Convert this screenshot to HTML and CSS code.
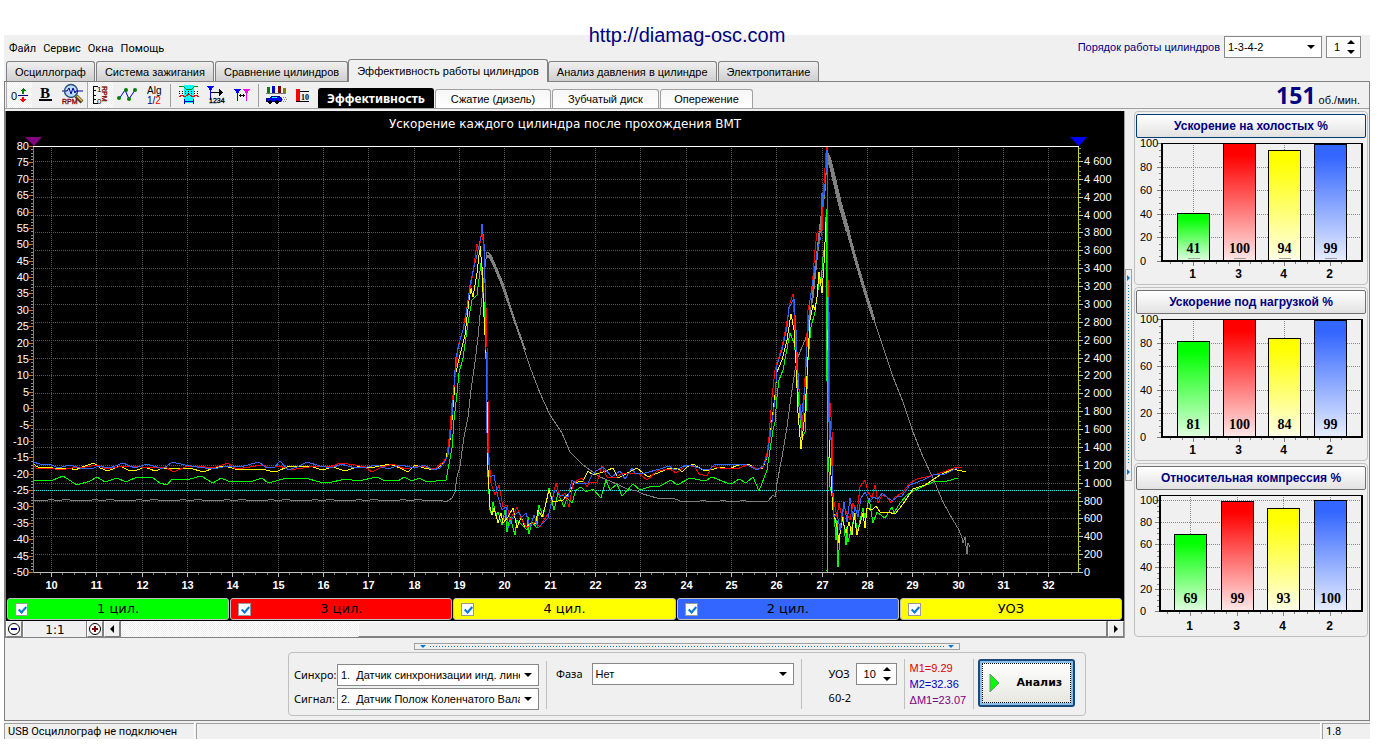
FILE: index.html
```html
<!DOCTYPE html>
<html lang="ru">
<head>
<meta charset="utf-8">
<title>Diamag</title>
<link rel="stylesheet" href="styles.css">
</head>
<body>
<div class="app">
  <header class="header">
    <nav class="menu">
      <button type="button">Файл</button><button type="button">Сервис</button><button type="button">Окна</button><button type="button">Помощь</button>
    </nav>
    <a class="site" href="#">http://diamag-osc.com</a>
    <div class="order">
      <label for="order">Порядок работы цилиндров</label>
      <span class="select order-select"><select id="order"><option>1-3-4-2</option></select></span>
      <span class="spin"><input type="text" value="1" aria-label="Номер цилиндра"></span>
    </div>
  </header>

  <nav class="tabs">
    <button type="button">Осциллограф</button>
    <button type="button">Система зажигания</button>
    <button type="button">Сравнение цилиндров</button>
    <button type="button" class="active">Эффективность работы цилиндров</button>
    <button type="button">Анализ давления в цилиндре</button>
    <button type="button">Электропитание</button>
  </nav>

  <main class="page">
    <div class="toolbar">
      <div class="tools">
        <button type="button" class="pressed" aria-label="Ноль"><svg width="26" height="26" shape-rendering="crispEdges"><text x="5" y="18" class="t-sans" font-size="11">0</text><path d="M12 13.5h10" stroke="#000080"/><path d="M17 12V8" stroke="#008000" stroke-width="2"/><path d="M14 9h6l-3-3z" fill="#008000"/><path d="M17 15v3" stroke="#f00" stroke-width="2"/><path d="M14 17h6l-3 4z" fill="#f00"/></svg></button>
        <button type="button" aria-label="Жирный"><svg width="26" height="26"><text x="12" y="16" text-anchor="middle" class="t-serif" font-size="15">B</text><path d="M6 17h13v2H6z"/></svg></button>
        <button type="button" aria-label="Обороты"><svg width="26" height="26"><path d="M2 9h21" stroke="#0000a0"/><circle cx="11" cy="9" r="6.500" fill="#b8dcf8" stroke="#305078" stroke-width="1.400"/><path d="M5 9h2l2-3 2 6 2-6 2 5 1-2h2" fill="none" stroke="#0000a0"/><path d="M16 14l6 6" stroke="#504020" stroke-width="4"/><path d="M17 14l5 5" stroke="#e8c858" stroke-width="1.500"/><text x="2" y="22" class="t-sans" font-size="7" stroke="#800000" stroke-width="0.300" fill="#800000">RPM</text></svg></button>
        <button type="button" class="pressed" aria-label="Шкала оборотов"><svg width="26" height="26" shape-rendering="crispEdges"><path d="M11 4.500H6.500v17H11M7 8.500h2M7 13.500h2M7 17.500h2" fill="none" stroke="#000"/><text x="10" y="10" class="t-sans" font-size="8">1</text><text x="10" y="22" class="t-sans" font-size="8">0</text><text transform="translate(15 4) rotate(90)" class="t-sans" font-size="7" stroke="#800000" stroke-width="0.300" fill="#800000">RPM</text></svg></button>
        <button type="button" aria-label="Точки"><svg width="26" height="26"><path d="M5 17l6-9 4 9 6-9" fill="none" stroke="#0000d0"/><g fill="#008000"><circle cx="5" cy="16" r="2"/><circle cx="12" cy="8" r="2"/><circle cx="15" cy="17" r="2"/><circle cx="21" cy="8" r="2"/></g></svg></button>
        <button type="button" aria-label="Алгоритм"><svg width="26" height="26"><text x="6" y="12" class="t-sans" font-size="10">Alg</text><text x="6" y="22" class="t-sans" font-size="10" fill="#000080">1/<tspan fill="#f00">2</tspan></text></svg></button>
        <span class="sep"></span>
        <button type="button" aria-label="Усреднение"><svg width="26" height="26" shape-rendering="crispEdges"><path d="M9 3h10v18H9z" fill="#0ff"/><path d="M4 4h4l3 3h6l3-3h3" fill="none" stroke="#008000"/><path d="M4 9.500h19M4 11.500h19" stroke="#000" stroke-dasharray="1 2"/><path d="M4 15l3-2 3 2 4-3 4 3 3-2 3 2" fill="none" stroke="#f00"/><path d="M9.500 17v5M18.500 17v5M9 19.500h9" stroke="#0000c0"/></svg></button>
        <button type="button" aria-label="Метка"><svg width="26" height="26" shape-rendering="crispEdges"><path d="M5 4h7l-3.500 5z" fill="#00f"/><path d="M8.500 7v11" stroke="#00f"/><path d="M9 10.500h9" stroke="#000"/><path d="M17 7l4 3.500-4 3.500z"/><text x="7" y="21" class="t-sans" font-size="7" stroke="#000" stroke-width="0.300">1234</text></svg></button>
        <button type="button" aria-label="Расстояние"><svg width="26" height="26" shape-rendering="crispEdges"><path d="M5 7h7l-3.500 5z" fill="#00f"/><path d="M8.500 10v9" stroke="#00f"/><path d="M14 7h7l-3.500 5z" fill="#f0f"/><path d="M17.500 10v9" stroke="#f0f"/><path d="M10 13.500h6M11.500 12v3M14.500 12v3" stroke="#000"/></svg></button>
        <span class="sep"></span>
        <button type="button" aria-label="Мощность"><svg width="26" height="26" shape-rendering="crispEdges"><path d="M4 5h3v6H4z" fill="#008000"/><path d="M9 4h3v7H9z" fill="#00c"/><path d="M15 4h3v7h-3z" fill="#800000"/><path d="M20 6h3v5h-3z" fill="#808000"/><path d="M3 11h20v1H3z" fill="#777"/><path d="M3 17l4-1 2-2h6l3 2v3H3z" fill="#00f" stroke="#000080"/><path d="M9 15h5v1H8z" fill="#0ff"/><circle cx="7" cy="20" r="1.700"/><circle cx="14" cy="20" r="1.700"/><path d="M18 15h5M19 17h5M18 19h5" stroke="#888" stroke-dasharray="1 1"/></svg></button>
        <button type="button" aria-label="Столбец"><svg width="26" height="26" shape-rendering="crispEdges"><path d="M6 7h4v12H6z" fill="#f00"/><path d="M10 9.500h9M6 19.500h13" stroke="#000"/><text x="11" y="18" class="t-serif" font-size="8">10</text></svg></button>
      </div>
      <nav class="subtabs">
        <button type="button" class="active">Эффективность</button>
        <button type="button" class="w-wide">Сжатие (дизель)</button>
        <button type="button" class="w-mid">Зубчатый диск</button>
        <button type="button" class="w-small">Опережение</button>
      </nav>
      <div class="rpm"><b>151</b> об./мин.</div>
    </div>

    <div class="work">
      <section class="scope">
        <svg id="scope" class="scope-plot" viewBox="6 111 1118 486" role="img" aria-label="Ускорение каждого цилиндра после прохождения ВМТ">
          <text class="plot-title" x="565" y="128" text-anchor="middle">Ускорение каждого цилиндра после прохождения ВМТ</text>
          <g id="grid" class="crisp"></g>
          <g id="traces" class="crisp"></g>
          <g id="axes" class="crisp"></g>
          <path d="M25 137h17l-8 9z" fill="#800080"/>
          <path d="M1070 137h17l-8 9z" fill="#00f"/>
          <g id="labels"></g>
        </svg>
        <div class="legend">
          <label class="green"><input type="checkbox" checked><span>1 цил.</span></label>
          <label class="red"><input type="checkbox" checked><span>3 цил.</span></label>
          <label class="yellow"><input type="checkbox" checked><span>4 цил.</span></label>
          <label class="blue"><input type="checkbox" checked><span>2 цил.</span></label>
          <label class="yellow"><input type="checkbox" checked><span>УОЗ</span></label>
        </div>
        <div class="scroll">
          <button type="button" aria-label="Уменьшить"><svg width="14" height="14"><circle cx="7" cy="7" r="5.500" fill="#fff" stroke="#000"/><path d="M4 6h6v2H4z" fill="#000080"/></svg></button>
          <output class="zoom">1:1</output>
          <button type="button" aria-label="Увеличить"><svg width="14" height="14"><circle cx="7" cy="7" r="5.500" fill="#fff" stroke="#000"/><path d="M4 6h6v2H4zM6 4h2v6H6z" fill="#800000"/></svg></button>
          <button type="button" class="arrow" aria-label="Влево"><svg width="8" height="8"><path d="M6 0v8L2 4z"/></svg></button>
          <div class="track"><div class="thumb"></div></div>
          <button type="button" class="arrow" aria-label="Вправо"><svg width="8" height="8"><path d="M2 0v8l4-4z"/></svg></button>
        </div>
      </section>
      <div class="vsplit"><div class="grip"><i></i><u></u><i></i></div></div>
      <aside class="cards">
        <section class="card"><button type="button" class="focus">Ускорение на холостых %</button><svg class="bars" viewBox="0 0 230 145"></svg></section>
        <section class="card"><button type="button">Ускорение под нагрузкой %</button><svg class="bars" viewBox="0 0 230 145"></svg></section>
        <section class="card"><button type="button">Относительная компрессия %</button><svg class="bars" viewBox="0 0 230 145"></svg></section>
      </aside>
    </div>

    <div class="hsplit"><i></i><u></u><i></i></div>

    <form class="controls">
      <div class="inputs">
        <label for="sync">Синхро:</label>
        <span class="select"><select id="sync"><option>1.&nbsp; Датчик синхронизации инд. линейка</option></select></span>
        <label for="signal">Сигнал:</label>
        <span class="select"><select id="signal"><option>2.&nbsp; Датчик Полож Коленчатого Вала</option></select></span>
      </div>
      <div class="phase">
        <label for="phase">Фаза</label>
        <span class="select"><select id="phase"><option>Нет</option></select></span>
      </div>
      <div class="advance">
        <div class="advance-row"><label for="uoz">УОЗ</label><span class="spin wide"><input id="uoz" type="text" value="10"></span></div>
        <div class="teeth">60-2</div>
      </div>
      <div class="marks"><div class="m1">M1=9.29</div><div class="m2">M2=32.36</div><div class="dm">ΔM1=23.07</div></div>
      <button type="button" class="analyze"><svg width="12" height="20"><path d="M1 1v18l9-9z" fill="#0f0" stroke="#6a9a6a"/></svg><b>Анализ</b></button>
    </form>
  </main>

  <footer class="status"><span class="usb">USB Осциллограф не подключен</span><span class="msg"></span><span class="ver">1.8</span></footer>
</div>
<script src="script.js"></script>
</body>
</html>
```
FILE: styles.css
```css
* { box-sizing: border-box; }
body {
  margin: 0;
  padding: 35px 12px 5px 4px;
  background: #fff;
  color: #000;
  font: 11px/14px "Noto Sans", sans-serif;
}
button, select, input { font: inherit; color: inherit; margin: 0; }
button { padding: 0; border: 0; background: none; }
.app { background: #f0f0f0; }
.crisp { shape-rendering: crispEdges; }

.header { position: relative; display: flex; height: 24px; padding-right: 9px; justify-content: space-between; }
.menu { display: flex; align-items: center; gap: 7px; padding: 3px 0 0 5px; font-family: Roboto, "Noto Sans", sans-serif; }
.site {
  position: absolute; left: 50%; top: -11px; transform: translateX(-50%);
  color: #000080; font: 20px/23px "Liberation Sans", sans-serif; text-decoration: none;
}
.order { display: flex; gap: 4px; align-items: center; color: #000080; font: 11px/14px "Liberation Sans", sans-serif; }
.order-select { width: 98px; }

.select, .spin { position: relative; display: inline-flex; color: #000; font: 11px/14px "Liberation Sans", sans-serif; }
.select select {
  appearance: none; width: 100%; height: 22px; padding: 0 18px 0 3px;
  border: 1px solid #888; border-radius: 0; background: #fff; outline: 0;
}
.select::after {
  content: ""; position: absolute; right: 7px; top: 9px;
  border: 4px solid transparent; border-top-color: #000; border-bottom: 0; pointer-events: none;
}
.spin { width: 35px; }
.spin.wide { width: 41px; }
.spin input { width: 100%; height: 22px; padding: 0 16px 0 7px; border: 1px solid #888; background: #fff; outline: 0; }
.spin::before, .spin::after { content: ""; position: absolute; right: 6px; border: 4px solid transparent; }
.spin::before { top: 4px; border-bottom-color: #000; border-top: 0; }
.spin::after { bottom: 4px; border-top-color: #000; border-bottom: 0; }

.tabs { display: flex; align-items: flex-end; gap: 1px; height: 22px; padding-left: 2px; }
.tabs button {
  height: 20px; padding: 0 8px; border: 1px solid #808080; border-bottom: 0; border-radius: 3px 3px 0 0;
  background: linear-gradient(#f0f0f0, #cfcfcf); font: 11px/18px "Liberation Sans", sans-serif;
}
.tabs .active { position: relative; height: 23px; margin: 0 -1px -1px; background: #f0f0f0; }

.page { border: 1px solid #808080; padding-bottom: 4px; }
.toolbar { display: flex; height: 27px; padding: 0 9px 0 1px; border-bottom: 1px solid #a0a0a0; }
.tools { display: flex; gap: 1px; align-items: flex-end; }
.tools button { width: 26px; height: 26px; }
.tools svg { display: block; }
.tools .pressed { background: repeating-conic-gradient(#fff 0 25%, #eee 0 50%) 0 0 / 2px 2px; border-left: 1px solid #aaa; }
.tools .pressed svg { margin-left: -1px; }
.sep { width: 1px; height: 23px; margin: 1px 3px 1px 2px; background: #a0a0a0; }
.t-sans { font-family: "Liberation Sans", sans-serif; }
.t-serif { font-family: "Liberation Serif", serif; font-weight: bold; }
.subtabs { display: flex; align-items: flex-end; gap: 1px; margin-left: 2px; }
.subtabs button {
  height: 19px; border: 1px solid #a0a0a0; border-bottom: 0; border-radius: 3px 3px 0 0;
  background: linear-gradient(#f6f6f6, #fff); font: 11px/18px "Liberation Sans", sans-serif;
}
.subtabs .active { width: 116px; height: 20px; background: #000; border-color: #000; color: #fff; font: bold 12px/20px "Noto Sans", sans-serif; }
.subtabs .w-wide { width: 116px; }
.subtabs .w-mid { width: 107px; }
.subtabs .w-small { width: 93px; }
.rpm { margin-left: auto; font: 11px/26px "Liberation Sans", sans-serif; white-space: nowrap; }
.rpm b { color: #000080; font: bold 23px/26px "Noto Sans", sans-serif; }

.work { display: flex; padding-top: 2px; }
.scope { flex: 1; min-width: 0; background: #000; border-left: 1px solid #808080; border-bottom: 1px solid #808080; }
.scope-plot { display: block; width: 100%; height: auto; background: #000; }
.scope-plot text { fill: #fff; font: 11px "Liberation Sans", sans-serif; }
.scope-plot .plot-title { font: 12px "DejaVu Sans", sans-serif; }
.scope-plot .bold { font-weight: bold; }

.legend { display: flex; gap: 1px; padding: 1px 2px 1px 1px; }
.legend label {
  flex: 1; display: flex; align-items: center; height: 22px; padding-left: 7px;
  border: 1px solid #c0c0c0; border-radius: 3px; font: 13px/20px "DejaVu Sans", sans-serif;
}
.legend span { flex: 1; margin-right: 20px; text-align: center; }
.legend input { appearance: none; position: relative; width: 13px; height: 13px; border: 1px solid #999; background: #fff; }
.legend input:checked::after {
  content: ""; position: absolute; left: 4px; top: 1px; width: 3px; height: 6px;
  border: solid #0078d7; border-width: 0 2px 2px 0; transform: rotate(42deg);
}
.green { background: #0f0; }
.red { background: #f00; }
.yellow { background: #ff0; }
.blue { background: #36f; }

.scroll { display: flex; gap: 1px; height: 16px; background: #808080; }
.scroll button { width: 16px; border: 1px solid; border-color: #fff #808080 #808080 #fff; background: #f0f0f0; }
.scroll button svg { display: block; margin: auto; }
.zoom { width: 63px; background: #f0f0f0; border-left: 1px solid #fff; text-align: center; font: 12px/18px "DejaVu Sans", sans-serif; }
.track { flex: 1; display: flex; justify-content: flex-end; background: repeating-conic-gradient(#fff 0 25%, #eee 0 50%) 0 0 / 2px 2px; }
.thumb { width: 76%; border: 1px solid; border-color: #fff #808080 #808080 #fff; background: #f0f0f0; }

.vsplit { display: flex; align-items: center; width: 10px; border-left: 1px solid #a0a0a0; }
.grip { display: flex; flex-direction: column; align-items: center; justify-content: space-between; width: 7px; height: 212px; border: 1px solid #a0a0a0; padding: 5px 0; }
.grip i { border: 3px solid transparent; border-left-color: #0078d7; border-right: 0; }
.grip u { flex: 1; width: 1px; margin: 4px 0; background: repeating-linear-gradient(#0078d7 0 1px, transparent 1px 3px); }

.cards { display: flex; flex-direction: column; gap: 2px; width: 234px; margin-right: 1px; }
.card { height: 174px; padding: 2px 1px; border: 1px solid #c0c0c0; border-radius: 4px; }
.card button {
  display: block; width: 100%; height: 24px; border: 1px solid #707070; border-radius: 2px;
  background: linear-gradient(#fff, #e2e2e2); color: #000080; font: bold 12px/20px "Liberation Sans", sans-serif;
}
.card .focus { border-color: #003c74; }
.bars { display: block; width: 100%; height: auto; }
.bars text { font: 11px "Liberation Sans", sans-serif; }
.bars .cat { font: bold 12px "Liberation Sans", sans-serif; }
.bars .val { font: bold 14px "Liberation Serif", serif; }

.hsplit { display: flex; align-items: center; width: 546px; height: 7px; margin: 5px auto 2px; border: 1px solid #a0a0a0; padding: 0 5px; }
.hsplit i { border: 3px solid transparent; border-top-color: #0078d7; border-bottom: 0; }
.hsplit u { flex: 1; height: 1px; margin: 0 4px; background: repeating-linear-gradient(90deg, #0078d7 0 1px, transparent 1px 3px); }

.controls {
  display: flex; width: 798px; height: 64px; margin: 0 auto; padding: 6px 10px 6px 5px;
  border: 1px solid #c0c0c0; border-radius: 4px; font-size: 11px;
}
.controls label { white-space: nowrap; }
.inputs { display: grid; grid-template-columns: 43px 202px; row-gap: 2px; align-items: center; padding: 5px 7px 0 0; }
.phase { display: flex; align-items: flex-start; gap: 9px; margin-top: 2px; padding: 2px 7px 0 9px; border-left: 1px solid #c0c0c0; }
.phase label, .advance label { line-height: 22px; }
.phase .select { width: 202px; }
.advance { padding: 4px 7px 0 27px; border-left: 1px solid #c0c0c0; }
.advance-row { display: flex; gap: 6px; }
.teeth { margin-top: 6px; }
.marks { width: 70px; padding: 1px 0 0 5px; border: solid #c0c0c0; border-width: 0 1px; font: 11px/16px "Liberation Sans", sans-serif; white-space: nowrap; }
.m1 { color: #e00000; }
.m2 { color: #0000c0; }
.dm { color: #800080; }
.analyze {
  display: flex; align-items: center; gap: 16px; flex: 1; height: 48px; margin-left: 4px; padding-left: 9px;
  border: 2px solid #1a4a7c; border-radius: 3px; outline: 1px dotted #000; outline-offset: -5px;
  box-shadow: inset 0 0 0 2px #8cc0ec; background: linear-gradient(#fff, #e6e6e0);
}
.analyze b { font: bold 11px/14px "DejaVu Sans", sans-serif; }

.status { display: flex; gap: 2px; padding-top: 2px; height: 18px; font: 11px/15px Roboto, "Noto Sans", sans-serif; }
.status span { border: 1px solid #a0a0a0; border-width: 1px 0 0 1px; padding-left: 3px; box-shadow: 1px 0 #fff; }
.status .usb { width: 190px; }
.msg { flex: 1; }
.ver { width: 48px; }
```
FILE: script.js
```js
const NS = 'http://www.w3.org/2000/svg';
function add(parent, name, attrs, text) {
  const el = document.createElementNS(NS, name);
  for (const key in attrs) el.setAttribute(key, attrs[key]);
  if (text !== undefined) el.textContent = text;
  parent.appendChild(el);
  return el;
}
function line(parent, x1, y1, x2, y2, stroke, dash, width) {
  add(parent, 'line', { x1, y1, x2, y2, stroke, 'stroke-dasharray': dash || 'none', 'stroke-width': width || 1 });
}
const byId = id => document.getElementById(id);

const plot = { left: 33.5, right: 1078.5, top: 146.5, bottom: 572.5 };
const grid = byId('grid'), axes = byId('axes'), labels = byId('labels');

for (let n = 10; n <= 32; n++) {
  const x = Math.round(51 + (n - 10) * 45.33) + 0.5;
  line(grid, x, 148, x, 572, '#585858', '1 1');
  line(axes, x, 572, x, 577, '#c0c0c0');
  for (let k = -1; k < 3; k++) {
    if (k === 0) continue;
    const mx = Math.floor(x + k * 11.33) + 0.5;
    line(axes, mx, 572, mx, 575, '#808080');
  }
  add(labels, 'text', { x: x, y: 589, 'text-anchor': 'middle', class: 'bold' }, n);
}
for (let v = 0; v <= 4600; v += 200) {
  const y = Math.round(572 - v * 411 / 4600) + 0.5;
  if (v) line(grid, 35, y, 1078, y, '#585858', '1 1');
  line(axes, 1079, y, 1083, y, '#c8c8c8');
  for (let k = 1; k < 4; k++) {
    const my = Math.round(y - k * 4.47) + 0.5;
    if (my > 147) line(axes, 1079, my, 1081, my, '#909090');
  }
  const text = v < 1000 ? String(v) : Math.floor(v / 1000) + ' ' + String(v % 1000).padStart(3, '0');
  add(labels, 'text', { x: 1084, y: y + 3.5 }, text);
}
for (let v = -50; v <= 80; v += 5) {
  const y = Math.round(572 - (v + 50) * 426 / 130) + 0.5;
  line(axes, 29, y, 33, y, '#c87830');
  for (let k = 1; k < 5 && v < 80; k++) {
    const my = Math.round(y - k * 3.28) + 0.5;
    line(axes, 31, my, 33, my, '#909090');
  }
  add(labels, 'text', { x: 29, y: y + 3.5, 'text-anchor': 'end' }, v);
}
line(grid, 34, 490.5, 1078, 490.5, '#0ff', '1 1');
line(axes, 33, plot.top, 1079, plot.top, '#fff');
line(axes, 33, plot.bottom, 1079, plot.bottom, '#c0c0c0');
line(axes, plot.left, 147, plot.left, 573, '#40a840');
line(axes, plot.right, 147, plot.right, 573, '#d0d040');

let idle = '';
for (let i = 0; i < 100; i++) idle += (34 + i * 4) + ',' + (500 + [0, -1, 0, 0, 1, 0, -1, 1, 0, 0, 1][(i * 7) % 11]) + ' ';
let cruise = '';
for (let i = 0; i < 18; i++) cruise += (686 + i * 4) + ',' + (501 + [0, 0, -1, 0, 1][(i * 3) % 5]) + ' ';

const traces = [
  ['#808080', 1, idle + '440,500 446,502 452,498 455,492 457,477 460,466 464,437 468,417 471,390 475,362 478,337 480,315 483,290 485,267 487,252 491,255 497,270 503,287 510,308 520,337 530,367 540,393 550,415 562,433 570,452 583,465 597,475 600,477 617,484 627,489 637,491 643,494 657,498 675,499 683,502 ' + cruise + '758,502 768,501 773,495 775,497 776,492 777,483 782,457 787,427 791,397 795,370 798,357 802,347 805,340 808,330 811,307 814,283 817,257 821,220 825,187 828,153 835,185 843,217 853,253 863,287 873,317 883,347 893,377 903,402 913,432 923,457 933,478 943,502 953,520 959,530 962,538 963,543 965,537 967,554 968,543 970,547'],
  ['#808080', 3, '487,256 490,256 496,269 503,286 508,301'],
  ['#808080', 2, '508,301 515,322 525,350'],
  ['#808080', 4, '828,155 832,170 840,204 848,232'],
  ['#808080', 3, '848,232 856,261 866,295 874,320'],
  ['#808080', 2, '812,303 816,265 821,220 825,187'],
  ['#0f0', 1, '33,481 53,480 63,476 77,485 90,481 97,477 105,482 117,478 126,482 137,477 153,478 160,483 167,485 172,479 190,479 201,476 213,483 221,478 228,481 253,481 262,478 268,483 287,478 305,478 320,482 328,483 345,479 358,481 377,477 383,480 398,481 404,477 412,481 419,478 427,482 446,480 452,448 454,420 457,393 459,373 463,358 468,323 472,300 477,295 481,263 483,287 485,317 487,400 488,477 490,510 492,515 493,502 496,515 498,512 502,525 505,510 507,532 510,517 515,535 517,520 527,530 528,517 529,534 532,522 537,528 539,505 543,517 549,488 554,510 558,493 564,507 567,498 572,503 576,490 581,487 586,492 593,489 601,498 606,480 610,490 617,484 622,496 633,484 640,490 652,486 660,486 671,480 677,485 690,478 705,481 712,477 727,483 733,483 739,479 746,483 753,477 759,491 767,470 770,450 773,430 775,422 777,397 779,380 783,370 790,333 794,343 796,357 797,377 799,407 802,438 805,432 807,390 808,360 811,327 815,312 817,297 820,277 821,283 823,257 825,243 826,217 827,209 827,571 828,457 830,487 833,500 836,540 837,520 838,567 840,533 843,517 846,545 847,527 848,542 852,527 855,513 857,533 863,508 865,518 869,498 873,523 877,512 885,518 892,507 894,513 900,503 907,495 913,491 922,487 933,482 947,481 958,478'],
  ['#ff0', 1, '33,464 38,467 46,467 60,469 70,468 75,470 85,466 94,463 100,468 108,471 120,466 130,471 137,470 145,467 155,471 163,468 175,469 190,468 203,472 214,468 225,466 235,469 262,469 270,471 278,471 287,467 300,466 310,466 322,470 333,467 345,471 360,466 370,468 380,466 390,464 400,468 408,472 415,465 424,468 435,470 442,465 446,458 450,440 452,420 454,395 455,377 458,363 465,335 469,300 471,288 473,297 477,273 480,246 482,267 484,317 486,353 487,400 488,470 490,507 492,515 494,508 498,523 501,513 503,523 508,517 513,508 517,528 521,517 525,527 532,523 536,523 538,510 542,517 545,507 549,490 553,502 563,500 570,492 574,483 583,481 588,471 593,475 603,472 613,468 618,478 637,468 648,477 670,468 677,468 682,472 687,467 693,464 703,470 710,470 721,467 728,469 742,464 748,464 755,468 762,469 766,460 769,443 772,420 775,395 777,372 782,360 787,340 791,314 794,330 796,363 798,413 801,449 805,413 808,357 810,320 813,305 815,310 817,297 819,272 822,293 824,263 826,222 827,330 829,370 829,440 833,510 837,527 839,543 842,517 846,533 849,522 852,535 854,513 857,535 861,520 863,513 865,528 867,508 872,510 876,506 880,512 888,512 895,514 903,504 913,489 925,485 940,475 953,469 966,472'],
  ['#f00', 1, '33,466 38,469 50,468 60,470 72,468 85,467 97,465 107,469 118,467 135,466 147,468 165,467 174,472 185,467 197,466 213,468 228,463 236,469 250,467 262,465 270,468 280,466 290,470 303,468 315,466 330,467 340,463 355,465 365,467 372,472 382,467 393,464 405,469 420,466 435,469 443,462 447,457 450,430 452,403 454,387 456,367 458,347 463,330 467,307 473,272 477,244 479,250 482,229 484,250 486,307 487,347 488,400 489,457 491,483 495,495 499,485 503,507 507,505 510,520 517,507 522,520 527,528 535,522 540,527 545,518 549,513 556,483 560,497 565,493 569,507 573,483 582,478 587,487 590,482 597,482 602,466 607,477 617,477 622,473 638,473 647,480 657,471 670,469 676,473 687,465 695,467 699,474 707,476 712,466 720,468 737,469 747,465 758,469 763,467 767,453 769,437 770,423 772,397 775,370 778,360 782,347 786,327 790,303 793,294 795,330 797,370 799,390 802,430 804,400 806,357 808,310 812,290 815,250 817,233 820,230 822,230 824,183 826,153 827,147 828,280 829,310 830,403 832,430 833,497 837,517 839,503 842,517 844,507 850,520 853,503 857,513 860,487 865,480 868,492 872,498 875,485 878,503 882,495 887,497 891,503 895,497 902,493 910,483 917,479 930,476 940,473 957,467 962,467'],
  ['#36f', 1, '33,462 40,464 50,464 58,468 70,465 80,468 92,469 98,466 110,468 123,463 135,468 147,464 163,469 172,462 185,465 197,467 213,469 228,466 240,467 259,462 265,467 274,468 280,461 288,470 297,467 307,462 320,466 332,468 341,464 355,468 367,467 376,465 388,469 400,465 415,468 424,465 433,470 440,468 445,461 448,455 451,430 453,400 455,370 456,357 460,340 465,323 470,285 474,267 477,255 481,237 482,224 484,243 485,283 486,350 487,433 488,453 490,477 494,475 498,497 502,510 506,507 508,528 513,517 518,512 522,517 526,513 530,527 534,515 538,528 548,518 552,500 555,490 560,495 568,497 572,480 576,483 588,483 593,473 603,467 612,477 620,471 625,479 632,468 635,473 645,473 660,469 669,466 675,470 687,465 690,465 702,469 710,469 715,464 730,465 745,464 757,470 763,466 767,457 771,430 775,400 777,365 782,350 787,327 789,307 794,299 796,330 798,373 801,420 805,387 807,347 810,300 814,273 818,247 821,237 822,193 823,207 826,173 827,150 828,297 829,403 831,437 833,493 834,517 837,513 840,530 844,502 847,522 850,498 853,517 855,507 858,517 861,498 865,492 870,502 873,497 878,499 882,493 892,501 897,497 902,496 910,485 923,480 933,475 945,474 957,468'],
  ['#36f', 2, '829,403 830,440'],
  ['#0f0', 1, '826.5,215 826.5,380 827.5,380 827.5,572']
];
for (const [stroke, width, points] of traces) {
  add(byId('traces'), 'polyline', { points, stroke, 'stroke-width': width, fill: 'none' });
}

const colors = ['#00ff00', '#ff0000', '#ffff00', '#3366ff'];
const names = [1, 3, 4, 2];
const charts = [
  { values: [41, 100, 94, 99], left: 25, bottom: 123, scale: 1.18, xs: [41, 87, 132, 178], underline: true },
  { values: [81, 100, 84, 99], left: 25, bottom: 123, scale: 1.18, xs: [41, 87, 132, 178] },
  { values: [69, 99, 93, 100], left: 23, bottom: 121, scale: 1.11, xs: [38, 85, 131, 178] }
];
document.querySelectorAll('.bars').forEach((svg, index) => {
  const c = charts[index], defs = add(svg, 'defs', {}), g = add(svg, 'g', { class: 'crisp' });
  for (let v = 0; v <= 100; v += 20) {
    const y = Math.round(c.bottom - v * c.scale) + 0.5;
    if (v && (v < 100 || index === 2)) line(g, c.left, y, 226, y, '#888', '1 1');
    line(g, c.left - 4, y, c.left, y, '#808080');
    for (let k = 1; k < 4 && v < 100; k++) {
      const my = Math.round(y - k * 5 * c.scale) + 0.5;
      line(g, c.left - 2, my, c.left, my, '#808080');
    }
    add(svg, 'text', { x: 4, y: y + 3.5 }, v);
  }
  c.values.forEach((value, i) => {
    const id = 'fade' + index + i, x = c.xs[i], top = Math.round(c.bottom - value * c.scale) + 0.5, mid = x + 16.5;
    const gradient = add(defs, 'linearGradient', { id, x1: 0, y1: 0, x2: 0, y2: 1 });
    add(gradient, 'stop', { offset: 0.1, 'stop-color': colors[i] });
    add(gradient, 'stop', { offset: 1, 'stop-color': ['#e0ffe0', '#ffe8e8', '#ffffe8', '#e8eeff'][i] });
    line(g, mid, 5, mid, c.bottom, '#888', '1 1');
    add(g, 'rect', { x: x + 0.5, y: top, width: 32, height: c.bottom - top, fill: 'url(#' + id + ')', stroke: '#000' });
    line(g, mid, c.bottom, mid, c.bottom + 5, '#808080');
    for (const d of [-23, -11, 11]) line(g, mid + d, c.bottom, mid + d, c.bottom + 3, '#808080');
    if (c.underline) line(g, mid - 6, c.bottom - 2.5, mid + 6, c.bottom - 2.5, '#a0a0a0');
    add(svg, 'text', { x: mid, y: c.bottom - 8, 'text-anchor': 'middle', class: 'val' }, value);
    add(svg, 'text', { x: mid - 1, y: 140, 'text-anchor': 'middle', class: 'cat' }, names[i]);
  });
  line(g, c.left, 5.5, 227, 5.5, '#000');
  line(g, c.left + 1, 5, c.left + 1, c.bottom + 1, '#000', '', 2);
  line(g, 226, 5, 226, c.bottom + 1, '#000', '', 2);
  line(g, c.left, c.bottom, 227, c.bottom, '#000', '', 2);
});
```
